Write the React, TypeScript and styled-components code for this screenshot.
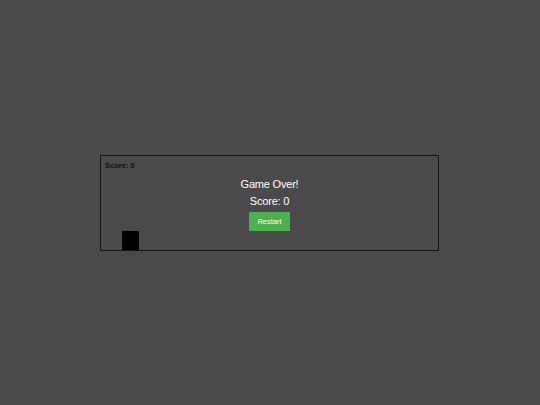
import React from "react";
import styled, { createGlobalStyle } from "styled-components";

const Global = createGlobalStyle`
  html, body { margin: 0; padding: 0; background: #4a4a4a; }
  body { font-family: "Liberation Sans", Arial, sans-serif; }
`;

const Page = styled.div`
  width: 540px;
  height: 405px;
  display: flex;
  align-items: center;
  justify-content: center;
`;

const Board = styled.div`
  position: relative;
  box-sizing: border-box;
  width: 339px;
  height: 96px;
  border: 1px solid #141414;
  margin-left: -1px;
`;

const ScoreLabel = styled.div`
  position: absolute;
  top: 5px;
  left: 4px;
  font-size: 7.5px;
  font-weight: bold;
  color: #111;
`;

const Player = styled.div`
  position: absolute;
  left: 21px;
  bottom: 0;
  width: 17px;
  height: 19px;
  background: #000;
`;

const Overlay = styled.div`
  position: absolute;
  inset: 0;
  display: flex;
  flex-direction: column;
  align-items: center;
  padding-top: 20px;
  color: #fff;
`;

const Title = styled.div`
  font-size: 11px;
  line-height: 16px;
  letter-spacing: -0.2px;
`;

const FinalScore = styled.div`
  font-size: 11px;
  line-height: 16px;
  margin-top: 1px;
  letter-spacing: -0.2px;
`;

const RestartButton = styled.button`
  margin-top: 3px;
  width: 41px;
  height: 19px;
  padding: 0;
  border: none;
  background: #4caf50;
  color: #fff;
  font-family: "Liberation Sans", Arial, sans-serif;
  font-size: 7.5px;
  cursor: pointer;
`;

export default function App() {
  return (
    <>
      <Global />
      <Page>
        <Board>
          <ScoreLabel>Score: 0</ScoreLabel>
          <Player />
          <Overlay>
            <Title>Game Over!</Title>
            <FinalScore>Score: 0</FinalScore>
            <RestartButton>Restart</RestartButton>
          </Overlay>
        </Board>
      </Page>
    </>
  );
}
